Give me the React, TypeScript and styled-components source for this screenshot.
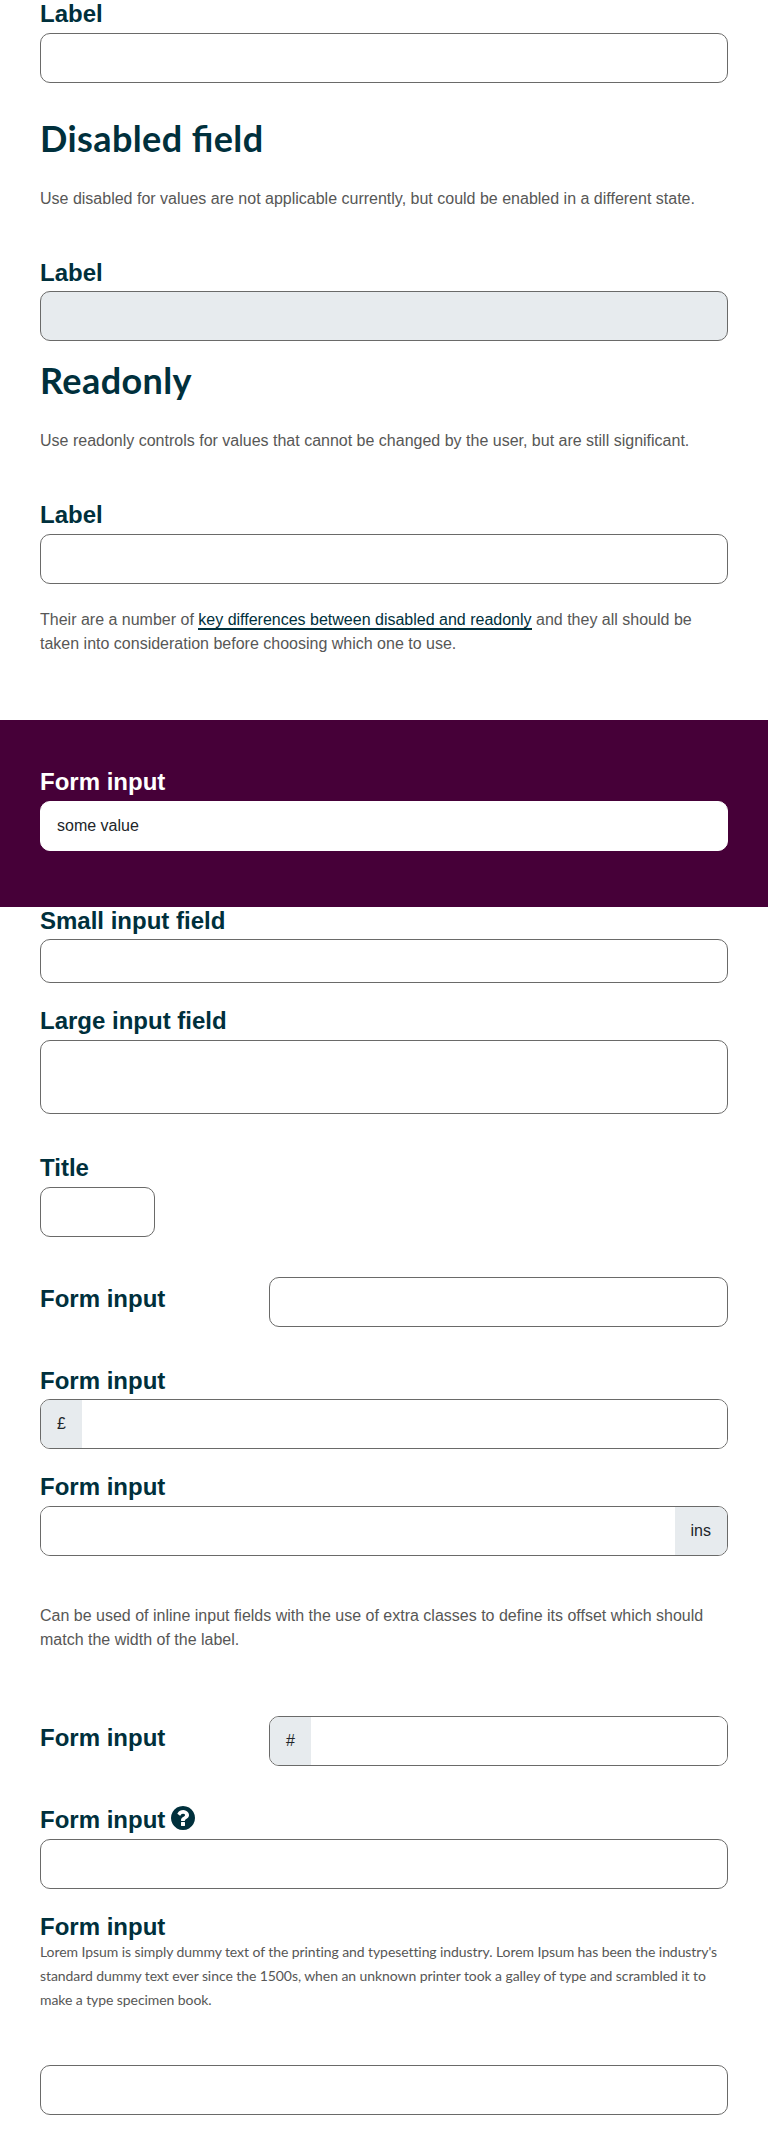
import React from "react";
import styled, { createGlobalStyle } from "styled-components";

const GlobalStyle = createGlobalStyle`
  *, *::before, *::after { box-sizing: border-box; }
  body {
    margin: 0;
    background: #fff;
    color: #575756;
    font: 16px/24px "Liberation Sans", Arial, sans-serif;
  }
`;

const Page = styled.main`
  display: flex;
  flex-direction: column;
  height: 2155px;
  overflow: hidden;
`;

const Section = styled.section`
  display: flex;
  flex-direction: column;
  padding: 0 40px;
`;

const Band = styled.section`
  height: 187px;
  margin-top: 64px;
  padding: 44px 40px 0;
  background: #460038;
  color: #fff;
`;

const Heading = styled.h2`
  margin: 0;
  color: #00303c;
  font: 700 36px/44px Lato, sans-serif;
  font-feature-settings: "liga" 1;
  letter-spacing: 0.4px;
`;

const Paragraph = styled.p<{ $top: number }>`
  margin: ${(p) => p.$top}px 0 0;
`;

const Link = styled.a`
  color: #00303c;
  text-decoration: none;
  border-bottom: 2px solid #00303c;
`;

const Field = styled.div<{ $top?: number }>`
  display: flex;
  flex-direction: column;
  margin-top: ${(p) => p.$top ?? 0}px;
`;

const InlineField = styled.div<{ $top: number }>`
  display: grid;
  grid-template-columns: 229px 1fr;
  margin-top: ${(p) => p.$top}px;
`;

const Label = styled.label<{ $light?: boolean; $height?: number; $top?: number }>`
  display: flex;
  gap: 6px;
  height: ${(p) => p.$height ?? 36}px;
  padding-top: ${(p) => p.$top ?? 0}px;
  color: ${(p) => (p.$light ? "#fff" : "#00303c")};
  font-size: 24px;
  font-weight: 700;
  line-height: 36px;
`;

const Input = styled.input<{ $height?: number; $width?: string }>`
  width: ${(p) => p.$width ?? "100%"};
  height: ${(p) => p.$height ?? 50}px;
  padding: 0 16px;
  border: 1px solid #6a6a69;
  border-radius: 10px;
  background: #fff;
  color: #212529;
  font: inherit;
  outline: 0;

  &:disabled { background: #e7ebee; }
`;

const BandInput = styled(Input)`
  border-color: #fff;
`;

const Group = styled.div`
  display: flex;
  height: 50px;
  overflow: hidden;
  border: 1px solid #6a6a69;
  border-radius: 10px;
`;

const GroupInput = styled.input`
  flex: 1;
  min-width: 0;
  padding: 0 16px;
  border: 0;
  outline: 0;
  background: #fff;
  font: inherit;
`;

const Addon = styled.span`
  padding: 12px 16px 0;
  background: #e7ebee;
  color: #212529;
`;

const HelpIcon = styled.svg`
  width: 24px;
  height: 24px;
  margin-top: 4px;
  fill: #00303c;
`;

const Help = styled.p`
  margin: 0;
  font: 14px/24px Lato, sans-serif;
  letter-spacing: -0.075px;
`;

export default function App() {
  return (
    <Page>
      <GlobalStyle />
      <Section>
        <Field $top={-4}>
          <Label $height={37}>Label</Label>
          <Input />
        </Field>
        <Field $top={33}>
          <Heading>Disabled field</Heading>
        </Field>
        <Paragraph $top={27}>
          Use disabled for values are not applicable currently, but could be enabled in a different state.
        </Paragraph>
        <Field $top={44}>
          <Label>Label</Label>
          <Input disabled />
        </Field>
        <Field $top={17}>
          <Heading>Readonly</Heading>
        </Field>
        <Paragraph $top={27}>
          Use readonly controls for values that cannot be changed by the user, but are still significant.
        </Paragraph>
        <Field $top={44}>
          <Label $height={37}>Label</Label>
          <Input readOnly />
        </Field>
        <Paragraph $top={24}>
          Their are a number of <Link>key differences between disabled and readonly</Link> and they all should be
          taken into consideration before choosing which one to use.
        </Paragraph>
      </Section>
      <Band>
        <Label $light $height={37}>Form input</Label>
        <BandInput defaultValue="some value" />
      </Band>
      <Section>
        <Field $top={-4}>
          <Label>Small input field</Label>
          <Input $height={44} />
        </Field>
        <Field $top={20}>
          <Label $height={37}>Large input field</Label>
          <Input $height={74} />
        </Field>
        <Field $top={36}>
          <Label $height={37}>Title</Label>
          <Input $width="115px" />
        </Field>
        <InlineField $top={40}>
          <Label $height={50} $top={4}>Form input</Label>
          <Input />
        </InlineField>
        <Field $top={36}>
          <Label>Form input</Label>
          <Group>
            <Addon>£</Addon>
            <GroupInput />
          </Group>
        </Field>
        <Field $top={20}>
          <Label $height={37}>Form input</Label>
          <Group>
            <GroupInput />
            <Addon>ins</Addon>
          </Group>
        </Field>
        <Paragraph $top={48}>
          Can be used of inline input fields with the use of extra classes to define its offset which should match
          the width of the label.
        </Paragraph>
        <InlineField $top={64}>
          <Label $height={50} $top={4}>Form input</Label>
          <Group>
            <Addon>#</Addon>
            <GroupInput />
          </Group>
        </InlineField>
        <Field $top={36}>
          <Label $height={37}>
            Form input
            <HelpIcon viewBox="0 0 1536 1536" aria-hidden="true">
              <path d="M896 1248v-192q0-14-9-23t-23-9H672q-14 0-23 9t-9 23v192q0 14 9 23t23 9h192q14 0 23-9t9-23zm256-672q0-88-55.500-163T958 297t-170-41q-243 0-371 213-15 24 8 42l132 100q7 6 19 6 16 0 25-12 53-68 86-92 34-24 86-24 48 0 85.500 26t37.500 59q0 38-20 61t-68 45q-63 28-115.500 86.500T640 892v36q0 14 9 23t23 9h192q14 0 23-9t9-23q0-19 21.500-49.500T972 829q32-18 49-28.500t46-35 44.500-48 28-60.500 12.500-81zm384 192q0 209-103 385.500T1153.500 1433 768 1536t-385.500-103T103 1153.500 0 768t103-385.500T382.500 103 768 0t385.500 103T1433 382.500 1536 768z" />
            </HelpIcon>
          </Label>
          <Input />
        </Field>
        <Field $top={20}>
          <Label $height={31}>Form input</Label>
          <Help>
            Lorem Ipsum is simply dummy text of the printing and typesetting industry. Lorem Ipsum has been the
            industry's standard dummy text ever since the 1500s, when an unknown printer took a galley of type and
            scrambled it to make a type specimen book.
          </Help>
        </Field>
        <Field $top={53}>
          <Input />
        </Field>
      </Section>
    </Page>
  );
}
